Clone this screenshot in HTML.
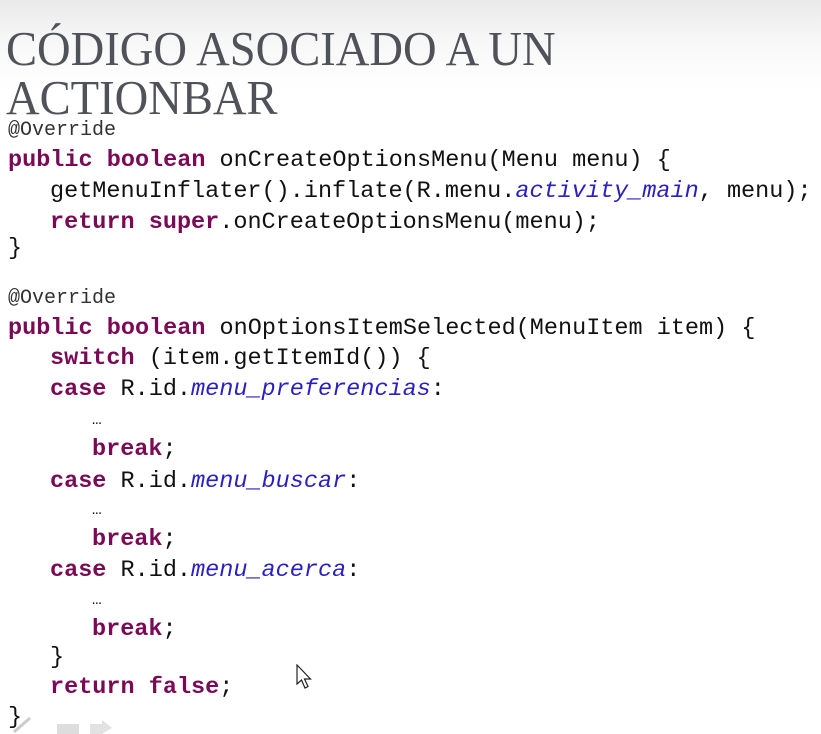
<!DOCTYPE html>
<html><head><meta charset="utf-8"><style>
html,body{margin:0;padding:0;}
body{width:821px;height:734px;overflow:hidden;position:relative;background:#fff;
background:linear-gradient(#e9e9ea 0px,#f7f7f7 40px,#fdfdfd 75px,#fff 90px);}
.t{position:absolute;left:6px;font-family:"Times New Roman","Liberation Serif","Noto Serif CJK SC",serif;font-weight:normal;font-size:49px;color:#50525a;white-space:nowrap;transform-origin:0 0;line-height:1;}
.c{position:absolute;font-family:"Liberation Mono",monospace;font-size:23.5px;line-height:30px;white-space:pre;color:#111;}
.k{color:#7a0a55;font-weight:bold;}
.i{color:#2a1fbf;font-style:italic;}
.a{font-size:20px;color:#333;}
</style></head><body>
<div class="t" style="top:24px;transform:scaleX(0.95)">CÓDIGO ASOCIADO A UN</div>
<div class="t" style="top:73px;transform:scaleX(0.95)">ACTIONBAR</div>

<div class="c a" style="left:8px;top:116px">@Override</div>
<div class="c" style="left:8px;top:146px"><span class="k">public</span> <span class="k">boolean</span> onCreateOptionsMenu(Menu menu) {</div>
<div class="c" style="left:50px;top:177px">getMenuInflater().inflate(R.menu.<span class="i">activity_main</span>, menu);</div>
<div class="c" style="left:50px;top:208px"><span class="k">return</span> <span class="k">super</span>.onCreateOptionsMenu(menu);</div>
<div class="c" style="left:8px;top:234px">}</div>

<div class="c a" style="left:8px;top:284px">@Override</div>
<div class="c" style="left:8px;top:314px"><span class="k">public</span> <span class="k">boolean</span> onOptionsItemSelected(MenuItem item) {</div>
<div class="c" style="left:50px;top:344px"><span class="k">switch</span> (item.getItemId()) {</div>
<div class="c" style="left:50px;top:375px"><span class="k">case</span> R.id.<span class="i">menu_preferencias</span>:</div>
<div class="c" style="left:92px;top:405px;font-size:16px">…</div>
<div class="c" style="left:92px;top:435px"><span class="k">break</span>;</div>
<div class="c" style="left:50px;top:467px"><span class="k">case</span> R.id.<span class="i">menu_buscar</span>:</div>
<div class="c" style="left:92px;top:495px;font-size:16px">…</div>
<div class="c" style="left:92px;top:525px"><span class="k">break</span>;</div>
<div class="c" style="left:50px;top:556px"><span class="k">case</span> R.id.<span class="i">menu_acerca</span>:</div>
<div class="c" style="left:92px;top:585px;font-size:16px">…</div>
<div class="c" style="left:92px;top:615px"><span class="k">break</span>;</div>
<div class="c" style="left:50px;top:643px">}</div>
<div class="c" style="left:50px;top:673px"><span class="k">return</span> <span class="k">false</span>;</div>
<div class="c" style="left:8px;top:703px">}</div>

<svg style="position:absolute;left:296px;top:664px" width="18" height="28" viewBox="0 0 18 28">
<path d="M1 1 L1 20 L5.5 16 L9 24 L12 22.5 L8.5 15 L14.5 15 Z" fill="#fff" stroke="#222" stroke-width="1.2"/>
</svg>
<svg style="position:absolute;left:10px;top:712px" width="110" height="22" viewBox="0 0 110 22">
<path d="M4 20 L20 6" stroke="#ccc" stroke-width="3"/>
<rect x="47" y="12" width="22" height="10" fill="#ddd"/>
<path d="M80 12 H92 V8 L102 16 L92 22 H80 Z" fill="#e2e2e2"/>
</svg>
</body></html>
